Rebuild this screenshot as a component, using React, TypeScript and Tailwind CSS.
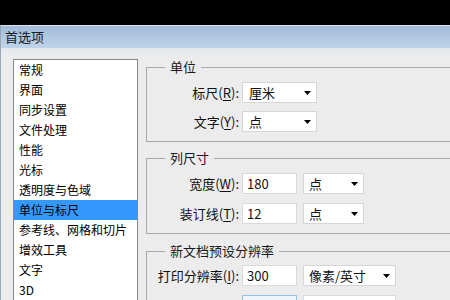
import React from "react";

function Arrow() {
  return (
    <svg width="7" height="4" viewBox="0 0 7 4" className="shrink-0">
      <polygon points="0,0 7,0 3.5,4" fill="#000" />
    </svg>
  );
}

function Select({ text, w, pl = "pl-[5px]" }: { text: string; w: string; pl?: string }) {
  return (
    <div
      className={`${w} ${pl} h-[21px] bg-white border border-[#d6d6d6] flex items-center justify-between pr-[5px] text-[13px] leading-none text-[#111]`}
    >
      <span>{text}</span>
      <Arrow />
    </div>
  );
}

function Input({ text }: { text: string }) {
  return (
    <div className="w-[55px] h-[21px] bg-white border border-[#dadada] flex items-center pl-[4px] text-[13px] leading-none text-[#111]">
      {text}
    </div>
  );
}

function Label({ pre, key1, gray = false }: { pre: string; key1: string; gray?: boolean }) {
  return (
    <div className={`w-[92px] text-right text-[13px] leading-none ${gray ? "text-[#a8a8a8]" : "text-[#111]"}`}>
      {pre}(<span className="underline underline-offset-2">{key1}</span>):
    </div>
  );
}

export default function App() {
  const items = [
    "常规",
    "界面",
    "同步设置",
    "文件处理",
    "性能",
    "光标",
    "透明度与色域",
    "单位与标尺",
    "参考线、网格和切片",
    "增效工具",
    "文字",
    "3D",
  ];
  return (
    <div className="w-[450px] h-[300px] overflow-hidden bg-black flex flex-col font-['Noto_Sans_CJK_SC','Noto_Sans',sans-serif]">
      <div className="h-[25px] shrink-0 bg-black" />
      <div className="flex-1 flex flex-col bg-[#ececec] border-l border-[#9aa7b6]">
        <div className="h-[23px] shrink-0 border-t border-[#dbe5ef] bg-gradient-to-b from-[#a2bbd8] to-[#bfd4ea] flex items-center pl-[4px] text-[13px] text-[#1a1a1a]">
          首选项
        </div>
        <div className="flex-1 flex items-start pl-[12px] pt-[10px] bg-[linear-gradient(#e4e9ee,#ececec_10px)]">
          <div className="mt-[1px] w-[125px] h-[300px] shrink-0 border border-[#828790] bg-white">
            {items.map((t) => (
              <div
                key={t}
                className={`h-[20px] leading-[20px] pl-[5px] text-[12px] text-black ${
                  t === "单位与标尺" ? "bg-[#3399ff]" : ""
                }`}
              >
                {t}
              </div>
            ))}
          </div>
          <div className="ml-[8px] w-[330px] shrink-0 flex flex-col">
            <fieldset className="m-0 p-0 pb-[9px] border border-[#a8a8a8]">
              <legend className="ml-[18px] px-[5px] text-[13px] leading-[18px] text-[#1a1a1a]">单位</legend>
              <div className="mt-[6px] h-[21px] flex items-center">
                <Label pre="标尺" key1="R" />
                <div className="ml-[3px]">
                  <Select text="厘米" w="w-[75px]" pl="pl-[6px]" />
                </div>
              </div>
              <div className="mt-[8px] h-[21px] flex items-center">
                <Label pre="文字" key1="Y" />
                <div className="ml-[3px]">
                  <Select text="点" w="w-[75px]" pl="pl-[6px]" />
                </div>
              </div>
            </fieldset>
            <fieldset className="mt-[7px] m-0 p-0 pb-[9px] border border-[#a8a8a8]">
              <legend className="ml-[18px] px-[5px] text-[13px] leading-[18px] text-[#1a1a1a]">列尺寸</legend>
              <div className="mt-[6px] h-[21px] flex items-center">
                <Label pre="宽度" key1="W" />
                <div className="ml-[3px] flex gap-[6px]">
                  <Input text="180" />
                  <Select text="点" w="w-[61px]" />
                </div>
              </div>
              <div className="mt-[9px] h-[21px] flex items-center">
                <Label pre="装订线" key1="T" />
                <div className="ml-[3px] flex gap-[6px]">
                  <Input text="12" />
                  <Select text="点" w="w-[61px]" />
                </div>
              </div>
            </fieldset>
            <fieldset className="mt-[8px] m-0 p-0 pb-[9px] border border-[#a8a8a8]">
              <legend className="ml-[18px] px-[5px] text-[13px] leading-[18px] text-[#1a1a1a]">新文档预设分辨率</legend>
              <div className="mt-[5px] h-[21px] flex items-center">
                <Label pre="打印分辨率" key1="I" />
                <div className="ml-[3px] flex gap-[6px]">
                  <Input text="300" />
                  <Select text="像素/英寸" w="w-[93px]" />
                </div>
              </div>
              <div className="mt-[9px] h-[21px] flex items-center">
                <Label pre="屏幕分辨率" key1="S" gray />
                <div className="ml-[3px] flex gap-[6px]">
                  <div className="w-[55px] h-[21px] bg-[#eef6fb] border border-[#8fc2e6]" />
                  <div className="w-[93px] h-[21px] bg-white border border-[#dadada]" />
                </div>
              </div>
            </fieldset>
          </div>
        </div>
      </div>
    </div>
  );
}
